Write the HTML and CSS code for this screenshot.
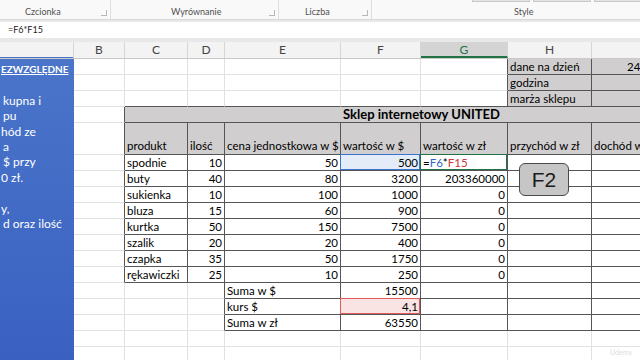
FILE: index.html
```html
<!DOCTYPE html>
<html lang="pl">
  <head>
    <meta charset="UTF-8" />
    <meta name="viewport" content="width=device-width, initial-scale=1.0" />
    <title>Sklep internetowy UNITED</title>
    <link rel="stylesheet" href="styles.css">
  </head>
  <body>
    <div class="ribbon">
        <div class="group group-font"><span>Czcionka</span><i class="launch"></i></div>
        <div class="group group-align"><span>Wyrównanie</span><i class="launch"></i></div>
        <div class="group group-number"><span>Liczba</span><i class="launch"></i></div>
        <div class="group group-style">
            <div class="gallery"><i></i><i></i><i></i></div>
            <span>Style</span>
        </div>
    </div>

    <div class="formula">=F6*F15</div>

    <div class="colheads">
        <div class="corner"></div>
        <div class="head col-b">B</div>
        <div class="head col-c">C</div>
        <div class="head col-d">D</div>
        <div class="head col-e">E</div>
        <div class="head col-f">F</div>
        <div class="head col-g active">G</div>
        <div class="head col-h">H</div>
        <div class="head col-i"></div>
    </div>

    <div class="main">
        <div class="panel">
            <p class="heading">EZWZGLĘDNE</p>
            <p></p>
            <p>kupna i</p>
            <p>pu</p>
            <p class="cut">hód ze</p>
            <p>a</p>
            <p>$ przy</p>
            <p class="cut">0 zł.</p>
            <p></p>
            <p class="cut">y,</p>
            <p>d oraz ilość</p>
        </div>

        <div class="sheet">
            <div class="row">
                <div class="c col-b"></div><div class="c col-c"></div><div class="c col-d"></div><div class="c col-e"></div><div class="c col-f"></div>
                <div class="c col-g br"></div><div class="c col-h bx fill">dane na dzień</div><div class="c col-i bx fill date">24.06.2019</div>
            </div>
            <div class="row">
                <div class="c col-b"></div><div class="c col-c"></div><div class="c col-d"></div><div class="c col-e"></div><div class="c col-f"></div>
                <div class="c col-g br"></div><div class="c col-h bx fill">godzina</div><div class="c col-i bx fill"></div>
            </div>
            <div class="row">
                <div class="c col-b"></div><div class="c col-c bb"></div><div class="c col-d bb"></div><div class="c col-e bb"></div><div class="c col-f bb"></div>
                <div class="c col-g br bb"></div><div class="c col-h bx fill">marża sklepu</div><div class="c col-i bx fill"></div>
            </div>
            <div class="row">
                <div class="c col-b br"></div><div class="c title bx fill">Sklep internetowy UNITED</div>
            </div>
            <div class="row tall">
                <div class="c col-b br"></div>
                <div class="c col-c bx fill lab">produkt</div>
                <div class="c col-d bx fill lab">ilość</div>
                <div class="c col-e bx fill lab">cena jednostkowa w $</div>
                <div class="c col-f bx fill lab">wartość w $</div>
                <div class="c col-g bx fill lab">wartość w zł</div>
                <div class="c col-h bx fill lab">przychód w zł</div>
                <div class="c col-i bx fill lab">dochód w zł</div>
            </div>
            <div class="row">
                <div class="c col-b br"></div><div class="c col-c bx">spodnie</div><div class="c col-d bx num">10</div><div class="c col-e bx num">50</div>
                <div class="c col-f bx num ref-blue">500</div>
                <div class="c col-g bx edit">=<span class="blue">F6</span>*<span class="red">F15</span></div>
                <div class="c col-h bx"></div><div class="c col-i bx"></div>
            </div>
            <div class="row">
                <div class="c col-b br"></div><div class="c col-c bx">buty</div><div class="c col-d bx num">40</div><div class="c col-e bx num">80</div>
                <div class="c col-f bx num">3200</div><div class="c col-g bx num">203360000</div><div class="c col-h bx"></div><div class="c col-i bx"></div>
            </div>
            <div class="row">
                <div class="c col-b br"></div><div class="c col-c bx">sukienka</div><div class="c col-d bx num">10</div><div class="c col-e bx num">100</div>
                <div class="c col-f bx num">1000</div><div class="c col-g bx num">0</div><div class="c col-h bx"></div><div class="c col-i bx"></div>
            </div>
            <div class="row">
                <div class="c col-b br"></div><div class="c col-c bx">bluza</div><div class="c col-d bx num">15</div><div class="c col-e bx num">60</div>
                <div class="c col-f bx num">900</div><div class="c col-g bx num">0</div><div class="c col-h bx"></div><div class="c col-i bx"></div>
            </div>
            <div class="row">
                <div class="c col-b br"></div><div class="c col-c bx">kurtka</div><div class="c col-d bx num">50</div><div class="c col-e bx num">150</div>
                <div class="c col-f bx num">7500</div><div class="c col-g bx num">0</div><div class="c col-h bx"></div><div class="c col-i bx"></div>
            </div>
            <div class="row">
                <div class="c col-b br"></div><div class="c col-c bx">szalik</div><div class="c col-d bx num">20</div><div class="c col-e bx num">20</div>
                <div class="c col-f bx num">400</div><div class="c col-g bx num">0</div><div class="c col-h bx"></div><div class="c col-i bx"></div>
            </div>
            <div class="row">
                <div class="c col-b br"></div><div class="c col-c bx">czapka</div><div class="c col-d bx num">35</div><div class="c col-e bx num">50</div>
                <div class="c col-f bx num">1750</div><div class="c col-g bx num">0</div><div class="c col-h bx"></div><div class="c col-i bx"></div>
            </div>
            <div class="row">
                <div class="c col-b br"></div><div class="c col-c bx">rękawiczki</div><div class="c col-d bx num">25</div><div class="c col-e bx num">10</div>
                <div class="c col-f bx num">250</div><div class="c col-g bx num">0</div><div class="c col-h bx"></div><div class="c col-i bx"></div>
            </div>
            <div class="row">
                <div class="c col-b"></div><div class="c col-c"></div><div class="c col-d br"></div><div class="c col-e bx">Suma w $</div>
                <div class="c col-f bx num">15500</div><div class="c col-g bx"></div><div class="c col-h bx"></div><div class="c col-i bx"></div>
            </div>
            <div class="row">
                <div class="c col-b"></div><div class="c col-c"></div><div class="c col-d br"></div><div class="c col-e bx">kurs $</div>
                <div class="c col-f bx num ref-red">4,1</div><div class="c col-g bx"></div><div class="c col-h bx"></div><div class="c col-i bx"></div>
            </div>
            <div class="row">
                <div class="c col-b"></div><div class="c col-c"></div><div class="c col-d br"></div><div class="c col-e bx">Suma w zł</div>
                <div class="c col-f bx num">63550</div><div class="c col-g bx"></div><div class="c col-h bx"></div><div class="c col-i bx"></div>
            </div>
            <div class="row">
                <div class="c col-b"></div><div class="c col-c"></div><div class="c col-d"></div><div class="c col-e"></div>
                <div class="c col-f"></div><div class="c col-g"></div><div class="c col-h"></div><div class="c col-i"></div>
            </div>
            <div class="row">
                <div class="c col-b"></div><div class="c col-c"></div><div class="c col-d"></div><div class="c col-e"></div>
                <div class="c col-f"></div><div class="c col-g"></div><div class="c col-h"></div><div class="c col-i"></div>
            </div>
        </div>
    </div>

    <div class="key">F2</div>
    <div class="brand">Udemy</div>
  </body>
</html>
```

FILE: styles.css
```css
* {
    box-sizing: border-box;
}
body {
    margin: 0;
    width: 640px;
    height: 360px;
    overflow: hidden;
    position: relative;
    background: #e8e8e8;
    font-family: Lato, "Noto Sans", sans-serif;
}

/* ribbon */
.ribbon {
    display: flex;
    height: 20px;
    background: #f9f9f9;
    border-bottom: 1px solid #d9d9d9;
}
.group {
    flex: none;
    display: flex;
    align-items: flex-end;
    justify-content: space-between;
    padding-bottom: 2px;
    border-right: 1px solid #dedede;
    font-size: 9px;
    color: #505050;
}
.group-font {
    width: 111px;
    padding-left: 25px;
    padding-right: 3px;
}
.group-align {
    width: 168px;
    padding-left: 60px;
    padding-right: 3px;
}
.group-number {
    width: 93px;
    padding-left: 26px;
    padding-right: 3px;
}
.group-style {
    flex: 1;
    border-right: none;
    flex-direction: column;
    align-items: flex-start;
    padding-left: 142px;
}
.gallery {
    display: flex;
    gap: 3px;
    margin-left: -42px;
    margin-top: -1px;
}
.gallery i {
    width: 58px;
    height: 3px;
    border: 1px solid #c8c8c8;
    border-top: none;
    background: #e4e4e4;
}
.launch {
    width: 6px;
    height: 6px;
    margin-bottom: 1px;
    border: 1px solid #b8b8b8;
    border-top: none;
    border-left: none;
}

/* formula bar */
.formula {
    margin-top: 2px;
    height: 16px;
    padding-left: 8px;
    background: #fff;
    font-size: 9px;
    line-height: 16px;
    color: #222;
}

/* column letters */
.colheads {
    display: flex;
    margin-top: 4px;
    height: 17px;
    background: #f3f3f3;
    border-bottom: 1px solid #c9c9c9;
}
.corner {
    flex: none;
    width: 74px;
    border-right: 1px solid #d6d6d6;
    box-shadow: inset 0 -1px #4a74c6;
}
.head {
    flex: none;
    border-right: 1px solid #d6d6d6;
    text-align: center;
    font-size: 12px;
    line-height: 16px;
    color: #444;
}
.head.active {
    background: #d4d4d4;
    color: #217346;
    border-bottom: 2px solid #217346;
}

.col-b { width: 51px; }
.col-c { width: 63px; }
.col-d { width: 37px; }
.col-e { width: 116px; }
.col-f { width: 80px; }
.col-g { width: 87px; }
.col-h { width: 84px; }
.col-i { width: 127px; }

/* sheet */
.main {
    display: flex;
    height: 301px;
}
.panel {
    flex: none;
    width: 74px;
    padding: 3px 0 0 3px;
    overflow: hidden;
    background: linear-gradient(#4a75c9, #3a61c2);
    color: #fff;
    font-size: 12px;
    line-height: 15.4px;
}
.panel p {
    margin: 0;
    height: 15.4px;
    white-space: nowrap;
}
.panel .heading {
    margin-left: -2px;
    font-weight: bold;
    font-size: 10px;
    text-decoration: underline;
}
.panel .cut {
    margin-left: -2px;
}
.sheet {
    flex: 1;
    overflow: hidden;
    background: #fff;
}
.row {
    display: flex;
    height: 16px;
}
.row.tall {
    height: 32px;
}
.c {
    flex: none;
    height: 100%;
    padding: 0 2px;
    border-right: 1px solid #e1e1e1;
    border-bottom: 1px solid #e1e1e1;
    overflow: hidden;
    white-space: nowrap;
    font-size: 11.5px;
    line-height: 15px;
    color: #000;
}
.bx {
    border-right-color: #555;
    border-bottom-color: #555;
}
.br {
    border-right-color: #555;
}
.bb {
    border-bottom-color: #555;
}
.fill {
    background: #d0cece;
}
.num {
    text-align: right;
}
.lab {
    display: flex;
    align-items: flex-end;
    padding-bottom: 1px;
}
.date {
    padding-left: 35px;
}
.title {
    width: 594px;
    text-align: center;
    font-weight: bold;
    font-size: 13px;
}

/* formula references */
.edit,
.ref-blue,
.ref-red {
    position: relative;
    overflow: visible;
}
.edit::after,
.ref-blue::after,
.ref-red::after {
    content: "";
    position: absolute;
    top: -1px;
    left: -1px;
    right: 0;
    bottom: 0;
    border: 1px solid #217346;
}
.ref-blue {
    background: #e3ecf7;
}
.ref-blue::after {
    border-color: #3a72d0;
}
.ref-red {
    background: #f9e3e3;
}
.ref-red::after {
    border-color: #e05a5a;
}
.blue {
    color: #3366cc;
}
.red {
    color: #d03a3a;
}

/* key overlay */
.key {
    position: absolute;
    left: 519px;
    top: 163px;
    width: 50px;
    height: 33px;
    display: flex;
    align-items: center;
    justify-content: center;
    border: 1px solid #4a4a4a;
    border-radius: 6px;
    background: #c6c6c6;
    font-family: "Liberation Sans", Arial, sans-serif;
    font-size: 21px;
    color: #1c1c1c;
}
.brand {
    position: absolute;
    right: 8px;
    bottom: 4px;
    font-size: 7px;
    color: #dcdcdc;
}
```
